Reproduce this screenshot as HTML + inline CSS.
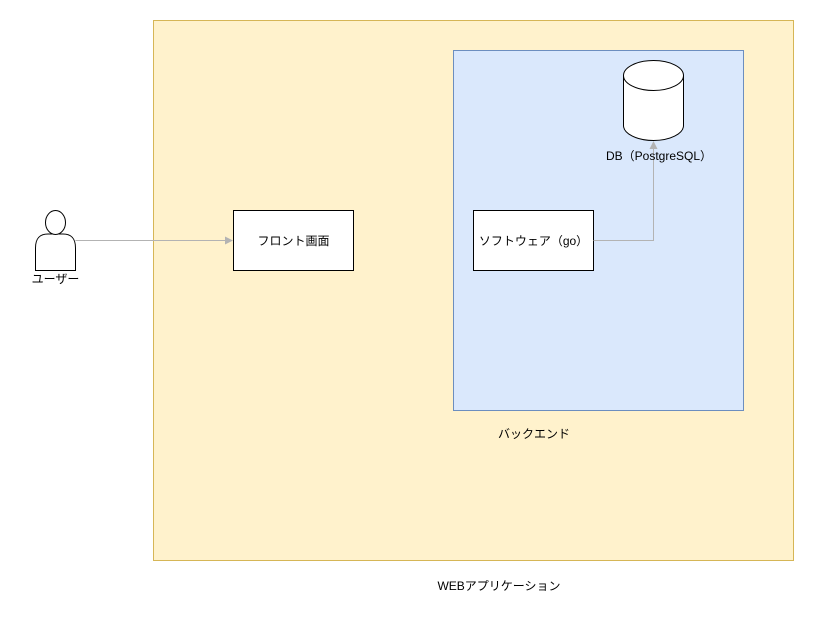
<!DOCTYPE html>
<html><head><meta charset="utf-8"><style>
html,body{margin:0;padding:0;background:#fff;width:814px;height:621px;overflow:hidden}
text{font-family:"Liberation Sans","Noto Sans CJK JP",sans-serif;font-size:12px;fill:#000}
</style></head><body>
<svg width="814" height="621" viewBox="0 0 814 621" xmlns="http://www.w3.org/2000/svg">
<rect x="153.5" y="20.5" width="640" height="540" fill="#fff2cc" stroke="#d6b656"/>
<rect x="453.5" y="50.5" width="290" height="360" fill="#dae8fc" stroke="#6c8ebf"/>
<rect x="233.5" y="210.5" width="120" height="60" fill="#fff" stroke="#000"/>
<rect x="473.5" y="210.5" width="120" height="60" fill="#fff" stroke="#000"/>
<path d="M623.5 75.5 v50 a30 15 0 0 0 60 0 v-50" fill="#fff" stroke="#000"/>
<ellipse cx="653.5" cy="75.5" rx="30" ry="15" fill="#fff" stroke="#000"/>
<path d="M35.5 270.5 V248 C35.5 236 42 234 48 234 H63 C69 234 75.5 236 75.5 248 V270.5 Z" fill="#fff" stroke="#000"/>
<ellipse cx="55.5" cy="222.5" rx="10" ry="12" fill="#fff" stroke="#000"/>
<path d="M75.5 240.5 H227" stroke="#b3b3b3" fill="none"/>
<path d="M233 240.5 l-8 -4 v8 z" fill="#b3b3b3"/>
<path d="M593.5 240.5 H653.5 V147" stroke="#b3b3b3" fill="none"/>
<path d="M653.5 141 l-4 8 h8 z" fill="#b3b3b3"/>
<text x="293.5" y="245" text-anchor="middle">フロント画面</text>
<text x="533.5" y="245" text-anchor="middle">ソフトウェア（go）</text>
<text x="659" y="160" text-anchor="middle">DB（PostgreSQL）</text>
<text x="55.5" y="283" text-anchor="middle">ユーザー</text>
<text x="534" y="438" text-anchor="middle">バックエンド</text>
<text x="499" y="590" text-anchor="middle">WEBアプリケーション</text>
</svg>
</body></html>
